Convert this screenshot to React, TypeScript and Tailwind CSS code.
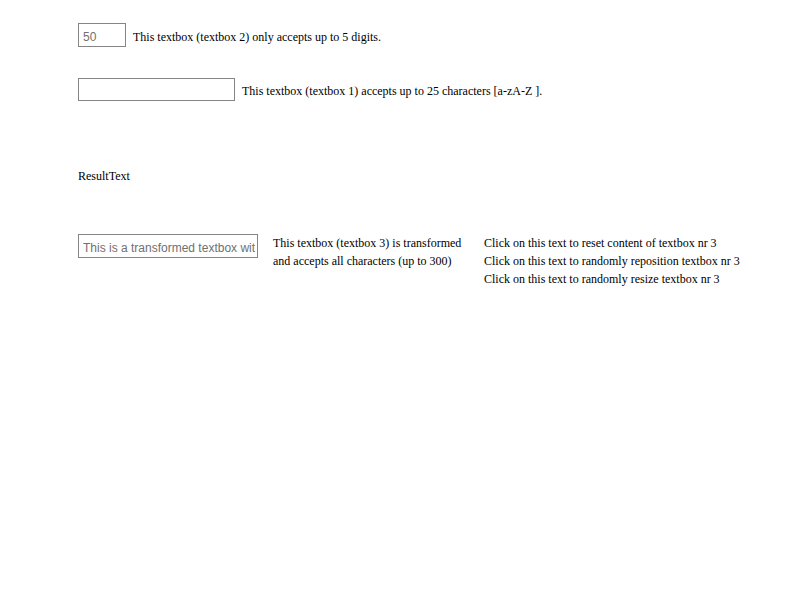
import { useState } from 'react';

export default function App() {
  const [digits, setDigits] = useState('50');
  const [letters, setLetters] = useState('');
  const [free, setFree] = useState('This is a transformed textbox with some text');

  return (
    <div className="min-h-screen bg-white pl-[78px] pt-[23px] font-['Liberation_Serif',serif] text-[12px] text-black">
      {/* textbox 2 */}
      <div className="flex items-start">
        <input
          value={digits}
          maxLength={5}
          onChange={(e) => setDigits(e.target.value.replace(/\D/g, ''))}
          className="w-[48px] h-[24px] border border-[#858585] pl-[4px] pr-[2px] pt-[3px] font-['Liberation_Sans',sans-serif] text-[12px] text-[#707070] outline-none"
        />
        <span className="ml-[7px] mt-[5px] leading-[18px]">This textbox (textbox 2) only accepts up to 5 digits.</span>
      </div>

      {/* textbox 1 */}
      <div className="flex items-start mt-[31px]">
        <input
          value={letters}
          maxLength={25}
          onChange={(e) => setLetters(e.target.value.replace(/[^a-zA-Z ]/g, ''))}
          className="w-[157px] h-[23px] border border-[#858585] pl-[4px] pr-[2px] pt-[3px] font-['Liberation_Sans',sans-serif] text-[12px] text-[#707070] outline-none"
        />
        <span className="ml-[7px] mt-[4px] leading-[18px]">This textbox (textbox 1) accepts up to 25 characters [a-zA-Z ].</span>
      </div>

      <div className="mt-[66px] leading-[18px]">ResultText</div>

      {/* textbox 3 */}
      <div className="flex mt-[49px]">
        <input
          value={free}
          maxLength={300}
          onChange={(e) => setFree(e.target.value)}
          className="w-[180px] h-[24px] border border-[#858585] pl-[4px] pr-[2px] pt-[3px] font-['Liberation_Sans',sans-serif] text-[12px] text-[#707070] outline-none"
        />
        <div className="ml-[15px] w-[211px] leading-[18px]">
          <div>This textbox (textbox 3) is transformed</div>
          <div>and accepts all characters (up to 300)</div>
        </div>
        <div className="leading-[18px]">
          <div className="cursor-pointer" onClick={() => setFree('')}>Click on this text to reset content of textbox nr 3</div>
          <div className="cursor-pointer">Click on this text to randomly reposition textbox nr 3</div>
          <div className="cursor-pointer">Click on this text to randomly resize textbox nr 3</div>
        </div>
      </div>
    </div>
  );
}
